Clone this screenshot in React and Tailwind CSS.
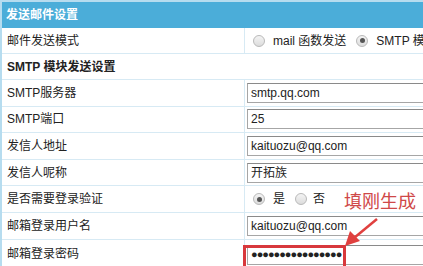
import React from 'react';

const font = { fontFamily: '"Liberation Sans", "Noto Sans CJK SC", sans-serif' };

function Radio({ checked }) {
  return (
    <span className="relative inline-flex h-[12px] w-[12px] shrink-0 items-center justify-center rounded-full border border-[#b9b9b9] bg-gradient-to-b from-[#f4f4f4] to-[#dcdcdc]">
      {checked && <span className="h-[5px] w-[5px] rounded-full bg-[#555]"></span>}
    </span>
  );
}

function Input({ value }) {
  return (
    <div className="flex h-[20px] w-[220px] shrink-0 items-center border border-[#a6a6a6] border-t-[#8a8a8a] bg-white pl-[3px] text-[12px] text-[#222]">
      {value}
    </div>
  );
}

function Row({ label, children, h = 'h-[26.6px]', align = 'items-center' }) {
  return (
    <div className={`grid grid-cols-[243px_minmax(0,1fr)] ${h} border-b border-[#d7eaf4]`}>
      <div className="flex items-center border-r border-[#d7eaf4] pl-[5px] text-[12px] text-[#222]">{label}</div>
      <div className={`flex ${align} gap-[6px] overflow-hidden whitespace-nowrap pl-[2px] text-[12px] text-[#222]`}>{children}</div>
    </div>
  );
}

export default function App() {
  return (
    <div className="relative h-[266px] w-[423px] overflow-hidden border-l-2 border-t-2 border-[#b6dcef] bg-white" style={font}>
      <div className="flex h-[26px] items-center bg-[#4badd9] pl-[4px] text-[12px] font-bold text-white">
        发送邮件设置
      </div>
      <Row label="邮件发送模式" h="h-[26px]">
        <span className="ml-[6px] flex shrink-0 items-center gap-[8px]">
          <Radio />
          <span>mail 函数发送</span>
        </span>
        <span className="ml-[4px] flex shrink-0 items-center gap-[8px]">
          <Radio checked />
          <span>SMTP 模块发送</span>
        </span>
      </Row>
      <div className="flex h-[26px] items-center border-b border-[#d7eaf4] pl-[5px] text-[12px] font-bold text-[#222]">
        SMTP 模块发送设置
      </div>
      <Row label="SMTP服务器"><Input value="smtp.qq.com" /></Row>
      <Row label="SMTP端口"><Input value="25" /></Row>
      <Row label="发信人地址"><Input value="kaituozu@qq.com" /></Row>
      <Row label="发信人呢称"><Input value="开拓族" /></Row>
      <Row label="是否需要登录验证">
        <span className="ml-[6px] flex shrink-0 items-center gap-[8px]">
          <Radio checked />
          <span>是</span>
        </span>
        <span className="ml-[4px] flex shrink-0 items-center gap-[6px]">
          <Radio />
          <span>否</span>
        </span>
      </Row>
      <Row label="邮箱登录用户名"><Input value="kaituozu@qq.com" /></Row>
      <Row label="邮箱登录密码" h="h-[30px]" align="items-start pt-[5px]">
        <Input value={<span className="text-[11px] tracking-[-1px]">●●●●●●●●●●●●●●●●</span>} />
      </Row>

      {/* annotation overlay */}
      <div className="absolute left-[342px] top-[188px] text-[18px] leading-[24px] text-[#cf4848]">填刚生成</div>
      <div className="absolute left-[241px] top-[243px] h-[40px] w-[103px] border-[3px] border-[#d8383c]"></div>
      <svg className="absolute left-[336px] top-[212px]" width="46" height="40" viewBox="0 0 46 40">
        <line x1="39" y1="5" x2="16" y2="24" stroke="#e0403f" strokeWidth="2.5" />
        <polygon points="7,32 12,17 22,27" fill="#e0403f" />
      </svg>
    </div>
  );
}
